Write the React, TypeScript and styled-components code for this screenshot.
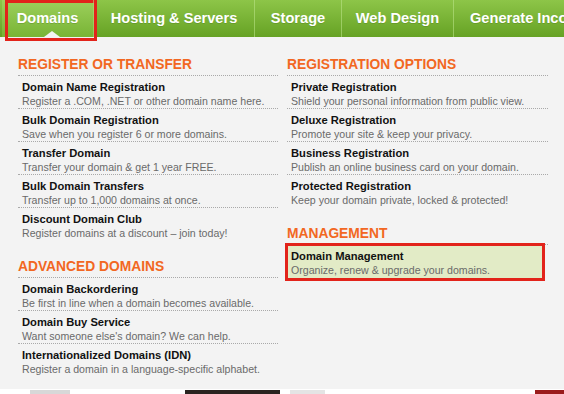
import React from 'react';
import styled, {createGlobalStyle} from 'styled-components';

type ItemT = {title:string; text:string; active?:boolean};
type SectionT = {heading:string; items:Array<ItemT>};
type TabT = {name:string; width:number};

const leftColumn:Array<SectionT> = [
    {
        heading: 'Register or Transfer',
        items: [
            {title: 'Domain Name Registration', text: 'Register a .COM, .NET or other domain name here.'},
            {title: 'Bulk Domain Registration', text: 'Save when you register 6 or more domains.'},
            {title: 'Transfer Domain', text: 'Transfer your domain & get 1 year FREE.'},
            {title: 'Bulk Domain Transfers', text: 'Transfer up to 1,000 domains at once.'},
            {title: 'Discount Domain Club', text: 'Register domains at a discount \u2013 join today!'},
        ],
    },
    {
        heading: 'Advanced Domains',
        items: [
            {title: 'Domain Backordering', text: 'Be first in line when a domain becomes available.'},
            {title: 'Domain Buy Service', text: 'Want someone else\'s domain? We can help.'},
            {title: 'Internationalized Domains (IDN)', text: 'Register a domain in a language-specific alphabet.'},
        ],
    },
];

const rightColumn:Array<SectionT> = [
    {
        heading: 'Registration Options',
        items: [
            {title: 'Private Registration', text: 'Shield your personal information from public view.'},
            {title: 'Deluxe Registration', text: 'Promote your site & keep your privacy.'},
            {title: 'Business Registration', text: 'Publish an online business card on your domain.'},
            {title: 'Protected Registration', text: 'Keep your domain private, locked & protected!'},
        ],
    },
    {
        heading: 'Management',
        items: [
            {title: 'Domain Management', text: 'Organize, renew & upgrade your domains.', active: true},
        ],
    },
];

// widths of the tabs as the site draws them
const tabs:Array<TabT> = [
    {name: 'Domains', width: 91},
    {name: 'Hosting & Servers', width: 161},
    {name: 'Storage', width: 87},
    {name: 'Web Design', width: 112},
    {name: 'Generate Income', width: 150},
];

const GlobalStyle = createGlobalStyle`
    html, body {
        margin: 0;
        padding: 0;
        background: #fff;
        overflow: hidden;
    }
    body {
        font-family: "Liberation Sans", Arial, sans-serif;
    }
`;

const Page = styled.div`
    width: 564px;
    height: 394px;
    display: flex;
    flex-direction: column;
`;

const NavBar = styled.nav`
    position: relative;
    z-index: 2;
    display: flex;
    height: 37px;
    padding-left: 2px;
    background: linear-gradient(#8dc548, #66a224);
    white-space: nowrap;
`;

const Tab = styled.div<{$active?:boolean; $w:number}>`
    position: relative;
    flex-shrink: 0;
    box-sizing: border-box;
    width: ${(p) => p.$w}px;
    display: flex;
    align-items: center;
    justify-content: center;
    padding-bottom: 2px;
    color: #fff;
    font-size: 14.6px;
    font-weight: bold;
    text-shadow: 0 1px 0 rgba(60, 100, 20, 0.25);
    border-left: 1px solid ${(p) => p.$active ? 'transparent' : 'rgba(190, 230, 140, 0.55)'};
    background: ${(p) => p.$active ? 'linear-gradient(#9dd05c, #78b435)' : 'none'};

    &:first-child {
        border-left: none;
    }

    &:last-child {
        justify-content: flex-start;
        padding-left: 16px;
    }

    ${(p) => p.$active && `
        &::before {
            content: '';
            position: absolute;
            left: 50%;
            bottom: 0;
            margin-left: -4px;
            border: 8px solid transparent;
            border-bottom: 6px solid #f3f3f3;
            border-top: none;
        }
        &::after {
            content: '';
            position: absolute;
            left: 3px;
            right: -4px;
            top: 0;
            bottom: -4px;
            border: 3px solid #e2231a;
        }
    `}
`;

const Panel = styled.div`
    display: grid;
    grid-template-columns: 260px 261px;
    column-gap: 9px;
    padding: 18px 16px 13px 18px;
    background: #f3f3f3;
`;

const Column = styled.div`
    display: flex;
    flex-direction: column;
`;

const Section = styled.section`
    & + & {
        margin-top: 17px;
    }
`;

const Heading = styled.h3`
    margin: 0;
    padding: 2px 0;
    line-height: 16px;
    font-size: 13.8px;
    font-weight: bold;
    text-transform: uppercase;
    color: #f26722;
    border-bottom: 1px dotted #a9a9a9;
`;

const Item = styled.div<{$active?:boolean}>`
    position: relative;
    padding: 4px 4px 0;
    height: 28px;
    border-bottom: 1px dotted #a9a9a9;
    background: ${(p) => p.$active ? '#e2ebc6' : 'transparent'};
    margin-right: ${(p) => p.$active ? '5px' : '0'};

    &:last-child {
        border-bottom: none;
    }

    ${(p) => p.$active && `
        padding-bottom: 2px;
        &::after {
            content: '';
            position: absolute;
            left: -2px;
            right: -2px;
            top: -2px;
            bottom: -2px;
            border: 3px solid #e2231a;
        }
    `}
`;

const ItemTitle = styled.div`
    font-size: 11.2px;
    line-height: 14px;
    font-weight: bold;
    color: #111;
`;

const ItemText = styled.div`
    font-size: 10.6px;
    line-height: 14px;
    color: #6a6a6a;
`;

const Backdrop = styled.div`
    flex: 1;
    display: flex;
    align-items: stretch;
    padding-top: 1px;
    background: #fff;
`;

const Shade = styled.div<{$w:number; $c:string}>`
    width: ${(p) => p.$w}px;
    flex-shrink: 0;
    background: ${(p) => p.$c};
`;

const MenuColumn = ({sections}:{sections:Array<SectionT>}) => (
    <Column>
        {sections.map((section) => (
            <Section key={section.heading}>
                <Heading>{section.heading}</Heading>
                {section.items.map((item) => (
                    <Item key={item.title} $active={item.active}>
                        <ItemTitle>{item.title}</ItemTitle>
                        <ItemText>{item.text}</ItemText>
                    </Item>
                ))}
            </Section>
        ))}
    </Column>
);

export default function App() {
    return (
        <Page>
            <GlobalStyle/>
            <NavBar>
                {tabs.map((tab, index) => (
                    <Tab key={tab.name} $w={tab.width} $active={index === 0}>{tab.name}</Tab>
                ))}
            </NavBar>
            <Panel>
                <MenuColumn sections={leftColumn}/>
                <MenuColumn sections={rightColumn}/>
            </Panel>
            <Backdrop>
                <Shade $w={30} $c="#fff"/>
                <Shade $w={40} $c="#d8d8d8"/>
                <Shade $w={115} $c="#fff"/>
                <Shade $w={95} $c="#2a2420"/>
                <Shade $w={10} $c="#fff"/>
                <Shade $w={35} $c="#e4e4e4"/>
                <Shade $w={210} $c="#fff"/>
                <Shade $w={29} $c="#9b1c1c"/>
            </Backdrop>
        </Page>
    );
}
